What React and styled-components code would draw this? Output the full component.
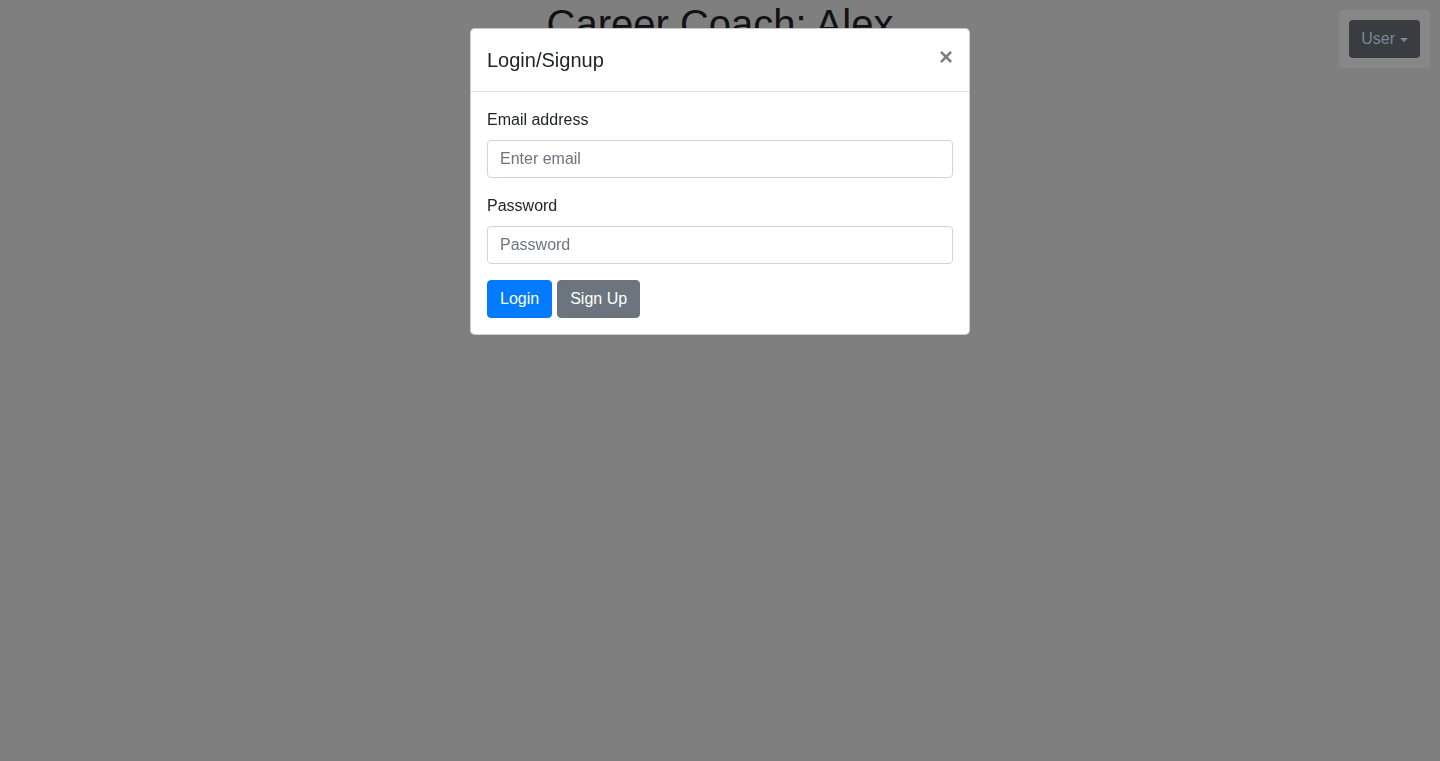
import React from "react";
import styled, { createGlobalStyle } from "styled-components";

const GlobalStyle = createGlobalStyle`
  * { box-sizing: border-box; }
  body {
    margin: 0;
    font-family: "Liberation Sans", Arial, Helvetica, sans-serif;
    font-size: 16px;
    line-height: 1.5;
    color: #212529;
    background: #fff;
  }
`;

const Page = styled.div`
  min-height: 761px;
  position: relative;
`;

const Title = styled.h1`
  margin: 0;
  font-size: 40px;
  font-weight: 500;
  line-height: 1.2;
  text-align: center;
  color: #212529;
`;

const UserBar = styled.div`
  position: fixed;
  top: 10px;
  right: 10px;
  z-index: 1060;
  padding: 10px;
  border-radius: 4px;
  background: #878787;
`;

const UserButton = styled.button`
  display: flex;
  align-items: center;
  gap: 5px;
  height: 38px;
  padding: 6px 12px;
  border: none;
  border-radius: 4px;
  background: #393c41;
  color: #7d8894;
  font-family: inherit;
  font-size: 16px;
  line-height: 1.5;
`;

const Caret = styled.span`
  display: inline-block;
  width: 0;
  height: 0;
  border-top: 4.8px solid currentColor;
  border-left: 4.8px solid transparent;
  border-right: 4.8px solid transparent;
  margin-top: 1px;
`;

const Backdrop = styled.div`
  position: fixed;
  inset: 0;
  z-index: 1040;
  background: rgba(0, 0, 0, 0.5);
`;

const ModalWrap = styled.div`
  position: fixed;
  inset: 0;
  z-index: 1050;
  display: flex;
  justify-content: center;
  align-items: flex-start;
  padding-top: 28px;
`;

const Dialog = styled.div`
  width: 500px;
  background: #fff;
  border: 1px solid rgba(0, 0, 0, 0.2);
  border-radius: 4.8px;
`;

const Header = styled.div`
  display: flex;
  align-items: flex-start;
  justify-content: space-between;
  padding: 16px;
  border-bottom: 1px solid #dee2e6;
`;

const ModalTitle = styled.h4`
  margin: 0;
  font-size: 20px;
  font-weight: 500;
  line-height: 1.5;
`;

const Close = styled.button`
  padding: 16px;
  margin: -16px -16px -16px auto;
  border: none;
  background: transparent;
  font-family: inherit;
  font-size: 24px;
  font-weight: 700;
  line-height: 1;
  color: #000;
  opacity: 0.5;
`;

const Body = styled.div`
  padding: 16px;
`;

const Group = styled.div`
  margin-bottom: 16px;
`;

const Label = styled.label`
  display: block;
  margin-bottom: 8px;
`;

const Input = styled.input`
  display: block;
  width: 100%;
  height: 38px;
  padding: 6px 12px;
  font-family: inherit;
  font-size: 16px;
  line-height: 1.5;
  color: #495057;
  border: 1px solid #ced4da;
  border-radius: 4px;
  &::placeholder { color: #6c757d; }
`;

const Actions = styled.div`
  display: flex;
  gap: 5px;
`;

const Button = styled.button`
  height: 38px;
  padding: 6px 12px;
  border: 1px solid ${p => (p.$primary ? "#007bff" : "#6c757d")};
  border-radius: 4px;
  background: ${p => (p.$primary ? "#007bff" : "#6c757d")};
  color: #fff;
  font-family: inherit;
  font-size: 16px;
  line-height: 1.5;
`;

export default function App() {
  return (
    <Page>
      <GlobalStyle />
      <Title>Career Coach: Alex</Title>
      <Backdrop />
      <UserBar>
        <UserButton>User<Caret /></UserButton>
      </UserBar>
      <ModalWrap>
        <Dialog>
          <Header>
            <ModalTitle>Login/Signup</ModalTitle>
            <Close>×</Close>
          </Header>
          <Body>
            <Group>
              <Label>Email address</Label>
              <Input type="email" placeholder="Enter email" />
            </Group>
            <Group>
              <Label>Password</Label>
              <Input type="password" placeholder="Password" />
            </Group>
            <Actions>
              <Button $primary>Login</Button>
              <Button>Sign Up</Button>
            </Actions>
          </Body>
        </Dialog>
      </ModalWrap>
    </Page>
  );
}
